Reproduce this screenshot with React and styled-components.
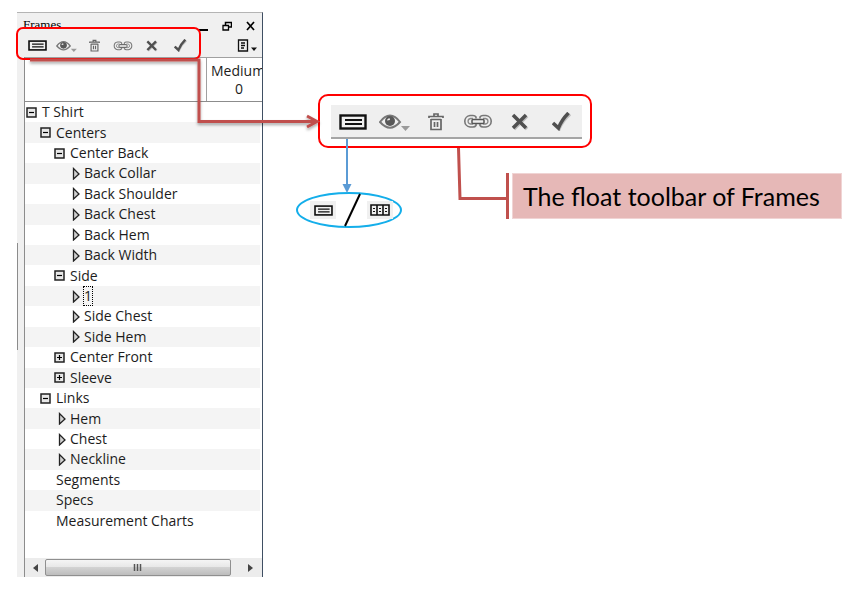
import React from 'react'
import styled, { createGlobalStyle } from 'styled-components'

const GlobalStyle = createGlobalStyle`
  * { box-sizing: border-box; }
  body {
    margin: 0;
    background: #fff;
    color: #1c1c1c;
    font-family: "Open Sans", "Noto Sans", sans-serif;
    font-size: 14px;
  }
  button {
    padding: 0;
    border: 0;
    background: none;
    color: inherit;
    font: inherit;
    cursor: pointer;
  }
  svg { display: block; }
`

const Page = styled.main`
  position: relative;
  display: flex;
  align-items: flex-start;
  padding: 12px 9px 15px 17px;
`

const Panel = styled.section`
  flex: none;
  width: 246px;
  background: #f0f0f0;
  border-top: 1px solid #b4b4b4;
  border-right: 1px solid #3f4f63;
`

const TitleBar = styled.header`
  display: flex;
  justify-content: space-between;
  height: 19px;
  padding: 0 7px 0 6px;
`

const Title = styled.h1`
  margin: 0;
  padding-top: 4px;
  font: 13px/16px "Liberation Serif", serif;
  color: #000;
`

const WindowButtons = styled.div`
  display: flex;
  gap: 14px;
  padding-top: 6px;
`

const ToolRow = styled.div`
  display: flex;
  justify-content: space-between;
  align-items: center;
  height: 25px;
  padding: 2px 5px 0 6px;
`

const Toolbar = styled.div`
  display: flex;
  width: ${props => props.$width};
  height: ${props => props.$height};
`

const ToolButton = styled.button`
  flex: 1;
  display: flex;
  align-items: center;
  justify-content: center;
`

const MenuButton = styled.button`
  display: flex;
  align-items: center;
`

const Body = styled.div`
  margin-left: 7px;
  border-left: 1px solid #8c8c8c;
  background: #fff;
`

const HeaderRow = styled.div`
  display: flex;
  height: 45px;
  border-top: 1px solid #a0a0a0;
  border-bottom: 1px solid #8c8c8c;
`

const FrameColumn = styled.div`
  flex: none;
  width: 182px;
  border-right: 1px solid #a0a0a0;
`

// wide size names are cut at the panel edge
const SizeColumn = styled.div`
  flex: 1;
  min-width: 0;
  padding: 4px 0 0 4px;
  overflow: hidden;
  line-height: 18px;
  white-space: nowrap;
`

const SizeValue = styled.div`
  width: 56px;
  text-align: center;
`

const Tree = styled.ul`
  display: grid;
  grid-auto-rows: 1fr;
  min-height: 429px;
  margin: 0 2px 27px 0;
  padding: 0;
  list-style: none;
`

const TreeRow = styled.li`
  display: flex;
  align-items: center;
  padding-left: ${props => 1 + props.$level * 14}px;
  line-height: 20px;
  white-space: nowrap;
  &:nth-child(even) { background: #f4f4f4; }
`

const Toggle = styled.button`
  display: flex;
  width: 16px;
  justify-content: ${props => (props.$leaf ? 'flex-end' : 'flex-start')};
  padding-right: ${props => (props.$leaf ? 4 : 0)}px;
`

const Spacer = styled.span`
  width: 16px;
`

const Label = styled.span`
  line-height: 18px;
  outline: ${props => (props.$focused ? '1px dotted #000' : 'none')};
`

const ScrollBar = styled.div`
  display: flex;
  align-items: center;
  height: 19px;
  padding-right: 2px;
  background: #ececec;
`

const ScrollButton = styled.button`
  display: flex;
  justify-content: center;
  width: 20px;
`

const Track = styled.div`
  flex: 1;
  padding-right: 9px;
`

const Thumb = styled.div`
  display: flex;
  align-items: center;
  justify-content: center;
  height: 17px;
  border: 1px solid #8f8f8f;
  border-radius: 2px;
  background: linear-gradient(#f5f5f5 0%, #e8e8e8 45%, #d2d2d2 50%, #bdbdbd 100%);
`

const Notes = styled.section`
  flex: 1;
  min-width: 0;
  padding: 82px 0 0 33px;
`

const Highlight = styled.div`
  width: 274px;
  margin-left: 22px;
  padding: 9px 8px 7px 11px;
  border: 2px solid #f00;
  border-radius: 10px;
`

const BigBar = styled.div`
  padding: 1px 0 0 1px;
  background: #efefef;
  border-bottom: 2px solid #a5a5a5;
`

const NoteRow = styled.div`
  display: flex;
  align-items: flex-start;
  gap: 104px;
  padding-top: 25px;
`

const Choice = styled.div`
  flex: none;
  display: flex;
  align-items: center;
  justify-content: space-between;
  width: 106px;
  height: 36px;
  margin-top: 19px;
  padding: 0 7px 0 12px;
  border: 2px solid #14aeea;
  border-radius: 50%;
`

const ChoiceIcon = styled.span`
  display: flex;
  align-items: center;
  justify-content: center;
  width: 26px;
  height: 18px;
  background: #f0f0f0;
`

const Callout = styled.div`
  flex: 1;
  display: flex;
  padding-left: 3px;
  border-left: 3px solid #c0504d;
`

const CalloutText = styled.p`
  flex: 1;
  margin: 0;
  padding: 0 10px;
  border: 1px solid #f0d4d4;
  background: #e6b8b7;
  color: #000;
  font: 25px/44px Lato, "Open Sans", sans-serif;
  white-space: nowrap;
`

const Overlay = styled.svg`
  position: absolute;
  top: 0;
  left: 0;
  pointer-events: none;
`

// every toolbar icon is drawn for the large bar, scale shrinks it for the panel
const Icon = ({ w, h, scale = 1, children }) => (
  <svg width={Math.round(w * scale)} height={Math.round(h * scale)} viewBox={`0 0 ${w} ${h}`} fill="none" aria-hidden="true">
    {children}
  </svg>
)

const ListIcon = ({ scale }) => (
  <Icon w={28} h={16} scale={scale}>
    <rect x="1.5" y="1.5" width="25" height="13" stroke="#111" strokeWidth="2.4" />
    <path d="M6 6h17M6 10h17" stroke="#111" strokeWidth="1.8" />
  </Icon>
)

const EyeIcon = ({ scale }) => (
  <Icon w={31} h={18} scale={scale}>
    <path d="M1 9C5 3.500 8 2.500 11 2.500S17 3.500 21 9C17 13.500 14 14.800 11 14.800S5 13.500 1 9Z" stroke="#777" strokeWidth="2" />
    <circle cx="11" cy="8" r="5" fill="#585858" />
    <path d="M8 7.500q0-2 2.500-2.500l.5 2Z" fill="#eee" />
    <path d="M22 13h9l-4.500 5Z" fill="#9a9a9a" />
  </Icon>
)

const TrashIcon = ({ scale }) => (
  <Icon w={16} h={19} scale={scale}>
    <path d="M1 6V4.500h14V6M6 4V2h4v2M3 7v10.500h10V7M3 7.500h10M6.500 10v5M9.500 10v5" stroke="#666" strokeWidth="1.700" />
  </Icon>
)

const LinkIcon = ({ scale }) => (
  <Icon w={30} h={15} scale={scale}>
    <path d="M13 4.500V3Q12 1.500 10 1.500H7A6 5.800 0 0 0 7 13h3Q12 13 13 11.500V10M17 4.500V3Q18 1.500 20 1.500h3A6 5.800 0 0 1 23 13h-3Q18 13 17 11.500V10" stroke="#777" strokeWidth="1.600" />
    <path d="M10 4.500H7.500A3 2.800 0 0 0 7.500 10H10M20 4.500h2.500A3 2.800 0 0 1 22.500 10H20" stroke="#888" strokeWidth="1.300" />
    <rect x="9" y="5.500" width="12" height="4" rx="1" fill="#eee" stroke="#555" strokeWidth="1.500" />
  </Icon>
)

const CrossIcon = ({ scale }) => (
  <Icon w={18} h={18} scale={scale}>
    <path d="M3 3l13 13M16 3L3 16" stroke="#bbb" strokeWidth="3.500" />
    <path d="M2 2l13 13M15 2L2 15" stroke="#505050" strokeWidth="3.500" />
  </Icon>
)

const CheckIcon = ({ scale }) => (
  <Icon w={19} h={19} scale={scale}>
    <path d="M2 12l5 5q3-8 11-15" stroke="#c2c2c2" strokeWidth="3.500" />
    <path d="M1 11l5.500 5q3-8 10-15" stroke="#505050" strokeWidth="3.500" />
  </Icon>
)

const GridIcon = () => (
  <Icon w={20} h={12}>
    <path d="M1 1h18v10H1ZM7 1v10M13 1v10" stroke="#111" strokeWidth="1.600" />
    <path d="M3 4.500h2M3 7.500h2M9 4.500h2M9 7.500h2M15 4.500h2M15 7.500h2" stroke="#111" />
  </Icon>
)

const tools = [
  { name: 'List view', Glyph: ListIcon },
  { name: 'Visibility', Glyph: EyeIcon },
  { name: 'Delete', Glyph: TrashIcon },
  { name: 'Link', Glyph: LinkIcon },
  { name: 'Cancel', Glyph: CrossIcon },
  { name: 'Apply', Glyph: CheckIcon },
]

const FrameTools = ({ width, height, scale }) => (
  <Toolbar $width={width} $height={height}>
    {tools.map(({ name, Glyph }) => (
      <ToolButton key={name} type="button" aria-label={name}>
        <Glyph scale={scale} />
      </ToolButton>
    ))}
  </Toolbar>
)

const rows = [
  { label: 'T Shirt', level: 0, kind: 'open' },
  { label: 'Centers', level: 1, kind: 'open' },
  { label: 'Center Back', level: 2, kind: 'open' },
  { label: 'Back Collar', level: 3, kind: 'leaf' },
  { label: 'Back Shoulder', level: 3, kind: 'leaf' },
  { label: 'Back Chest', level: 3, kind: 'leaf' },
  { label: 'Back Hem', level: 3, kind: 'leaf' },
  { label: 'Back Width', level: 3, kind: 'leaf' },
  { label: 'Side', level: 2, kind: 'open' },
  { label: '1', level: 3, kind: 'leaf', focused: true },
  { label: 'Side Chest', level: 3, kind: 'leaf' },
  { label: 'Side Hem', level: 3, kind: 'leaf' },
  { label: 'Center Front', level: 2, kind: 'closed' },
  { label: 'Sleeve', level: 2, kind: 'closed' },
  { label: 'Links', level: 1, kind: 'open' },
  { label: 'Hem', level: 2, kind: 'leaf' },
  { label: 'Chest', level: 2, kind: 'leaf' },
  { label: 'Neckline', level: 2, kind: 'leaf' },
  { label: 'Segments', level: 1 },
  { label: 'Specs', level: 1 },
  { label: 'Measurement Charts', level: 1 },
]

const RowToggle = ({ label, kind }) => {
  if (!kind) return <Spacer />
  if (kind === 'leaf') {
    return (
      <Toggle type="button" $leaf aria-label={`Select ${label}`}>
        <svg width="8" height="13" viewBox="0 0 8 13">
          <path d="M1.500 1.500v10.500L7 7Z" fill="#d0d0d0" stroke="#222" strokeWidth="1.300" />
        </svg>
      </Toggle>
    )
  }
  return (
    <Toggle type="button" aria-label={`Toggle ${label}`} aria-expanded={kind === 'open'}>
      <svg width="11" height="11" viewBox="0 0 11 11">
        <rect x="1" y="1" width="9" height="9" fill="#e8e8e8" stroke="#222" strokeWidth="1.500" />
        <path d={kind === 'open' ? 'M3 5.500h5' : 'M3 5.500h5M5.500 3v5'} stroke="#000" strokeWidth="1.200" />
      </svg>
    </Toggle>
  )
}

const FramesPanel = () => (
  <Panel>
    <TitleBar>
      <Title>Frames</Title>
      <WindowButtons>
        <button type="button" aria-label="Minimize">
          <svg width="9" height="10"><path d="M0 9h9" stroke="#000" strokeWidth="2" /></svg>
        </button>
        <button type="button" aria-label="Restore">
          <svg width="10" height="10" fill="none" stroke="#000">
            <path d="M3.500 4V1.500h6V6H7" strokeWidth="1.500" />
            <path d="M1 4.500h5.500v4.500H1Z" strokeWidth="1.300" />
          </svg>
        </button>
        <button type="button" aria-label="Close">
          <svg width="9" height="10"><path d="M1 1l7 8M8 1L1 9" stroke="#000" strokeWidth="1.700" /></svg>
        </button>
      </WindowButtons>
    </TitleBar>
    <ToolRow>
      <FrameTools width="172px" height="22px" scale={0.67} />
      <MenuButton type="button" aria-label="Panel menu">
        <svg width="20" height="13" viewBox="0 0 20 13">
          <path d="M1.500 1h9v11h-9ZM4 4h4M4 6.500h4M4 9h3" fill="none" stroke="#111" strokeWidth="1.300" />
          <path d="M14 8.500h6l-3 3.500Z" fill="#111" />
        </svg>
      </MenuButton>
    </ToolRow>
    <Body>
      <HeaderRow>
        <FrameColumn />
        <SizeColumn>
          Medium
          <SizeValue>0</SizeValue>
        </SizeColumn>
      </HeaderRow>
      <Tree>
        {rows.map(row => (
          <TreeRow key={row.label} $level={row.level}>
            <RowToggle label={row.label} kind={row.kind} />
            <Label $focused={row.focused}>{row.label}</Label>
          </TreeRow>
        ))}
      </Tree>
      <ScrollBar>
        <ScrollButton type="button" aria-label="Scroll left">
          <svg width="5" height="8"><path d="M5 0v8L0 4Z" fill="#444" /></svg>
        </ScrollButton>
        <Track>
          <Thumb>
            <svg width="10" height="7"><path d="M1.500 0v7M4.500 0v7M7.500 0v7" stroke="#555" strokeWidth="1.500" /></svg>
          </Thumb>
        </Track>
        <ScrollButton type="button" aria-label="Scroll right">
          <svg width="5" height="8"><path d="M0 0v8L5 4Z" fill="#444" /></svg>
        </ScrollButton>
      </ScrollBar>
    </Body>
  </Panel>
)

// arrows and outlines drawn over the panel and the notes
const Connectors = () => (
  <Overlay width="600" height="360" fill="none" aria-hidden="true">
    <defs>
      <filter id="soft" x="-10%" y="-10%" width="120%" height="130%">
        <feDropShadow dx="0" dy="2" stdDeviation="1.500" floodColor="#000" floodOpacity=".35" />
      </filter>
    </defs>
    <path d="M17.500 243v107" stroke="#8c8c8c" />
    <rect x="17" y="28" width="183" height="31" rx="6" stroke="#f00" strokeWidth="2" />
    <g filter="url(#soft)" stroke="#c0504d" strokeWidth="3">
      <path d="M30 60h169v61.500h117" />
      <path d="M307 116l10 5.500-10 5.500" />
    </g>
    <path d="M458.500 148l1.500 50.500h46" stroke="#c0504d" strokeWidth="3" />
    <path d="M347 139v46" stroke="#5b9bd5" strokeWidth="2" />
    <path d="M342.500 184h9l-4.500 9Z" fill="#5b9bd5" />
    <path d="M345 226l15-32" stroke="#000" strokeWidth="2" />
  </Overlay>
)

export default function App() {
  return (
    <>
      <GlobalStyle />
      <Page>
        <FramesPanel />
        <Notes>
          <Highlight>
            <BigBar>
              <FrameTools width="100%" height="31px" scale={1} />
            </BigBar>
          </Highlight>
          <NoteRow>
            <Choice>
              <ChoiceIcon><ListIcon scale={0.67} /></ChoiceIcon>
              <ChoiceIcon><GridIcon /></ChoiceIcon>
            </Choice>
            <Callout>
              <CalloutText>The float toolbar of Frames</CalloutText>
            </Callout>
          </NoteRow>
        </Notes>
        <Connectors />
      </Page>
    </>
  )
}
